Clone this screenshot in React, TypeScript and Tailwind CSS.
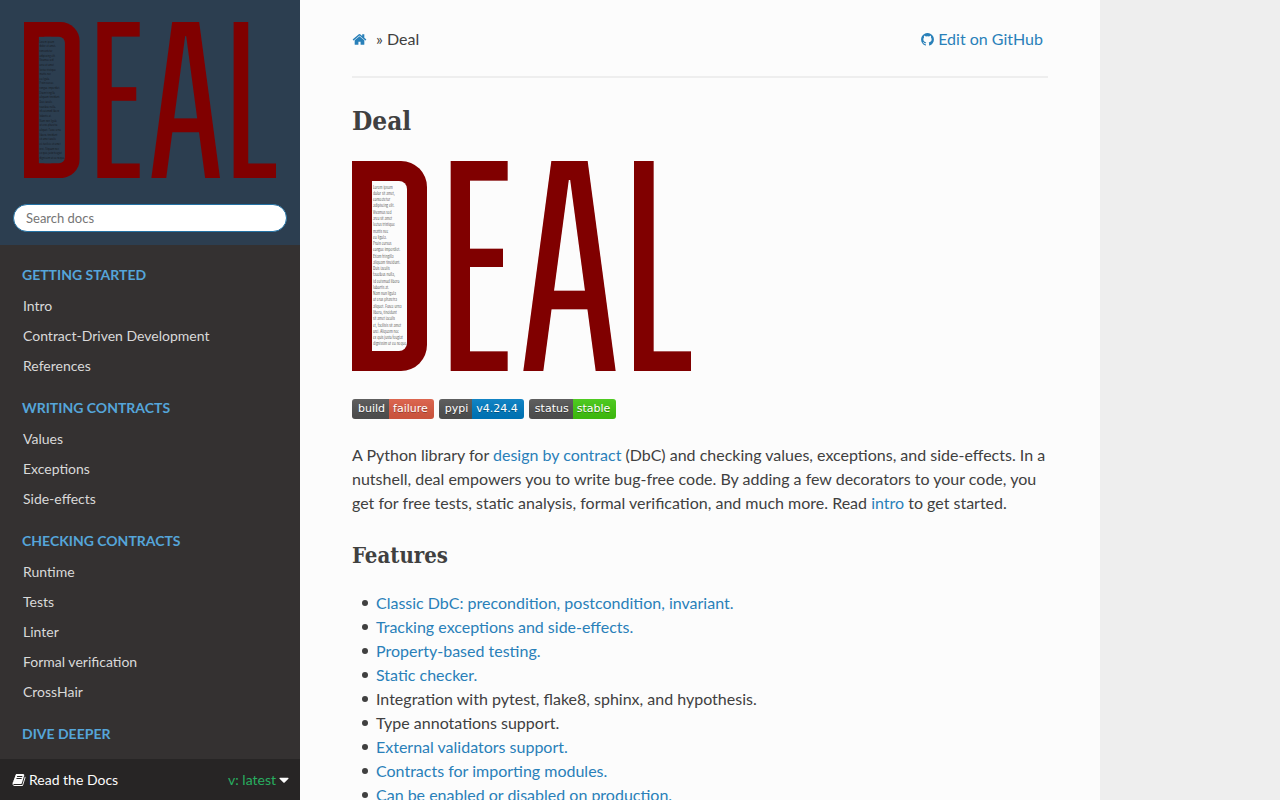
import { useId } from "react";

const loremLines = [
  "Lorem ipsum", "dolor sit amet,", "consectetur", "adipiscing elit.", "Vivamus sed",
  "arcu sit amet", "lectus tristique", "mattis nec", "eu ligula.", "Proin cursus",
  "congue  imperdiet.", "Etiam fringilla", "aliquam tincidunt.", "Duis  iaculis",
  "faucibus nulla,", "id  euismod libero", "lobortis at.", "Nam non ligula",
  "ut eros pharetra", "aliquet. Fusce urna", "libero, tincidunt", "sit amet iaculis",
  "et, facilisis sit amet", "orci. Aliquam nec", "ex quis justo feugiat", "dignissim ut eu neque",
];

function DealLogo({ className }: { className: string }) {
  const maskId = useId();
  return (
    <svg viewBox="0 0 1017 630" className={className} role="img" aria-label="Deal logo">
      <mask id={maskId} maskUnits="userSpaceOnUse" x="0" y="0" width="230" height="630">
        <rect width="225" height="630" rx="78" fill="white" />
        <rect width="110" height="630" fill="white" />
        <rect x="60" y="60" width="105" height="510" rx="24" fill="black" />
        <rect x="60" y="60" width="50" height="510" fill="black" />
      </mask>
      <rect width="225" height="630" fill="#800000" mask={`url(#${maskId})`} />
      <g fill="#111" fontSize="14" fontWeight="300" fontFamily="'Open Sans Condensed Light','Open Sans Condensed','Roboto Condensed',sans-serif">
        {loremLines.map((line, i) => (
          <text key={line} x="63" y={83 + i * 18.8}>{line}</text>
        ))}
      </g>
      <g fill="#800000">
        <rect x="296" width="58" height="630" />
        <rect x="320" width="147" height="59" />
        <rect x="320" y="263" width="133" height="55" />
        <rect x="320" y="571" width="147" height="59" />
        <rect x="630" width="46" height="57" />
        <rect x="590" y="389" width="124" height="56" />
        <rect x="846" width="59" height="630" />
        <rect x="870" y="571" width="147" height="59" />
      </g>
      <g stroke="#800000" strokeWidth="59.5">
        <line x1="536" y1="690" x2="636" y2="-60" />
        <line x1="769" y1="690" x2="669" y2="-60" />
      </g>
    </svg>
  );
}

function Icon({ path, className }: { path: string; className: string }) {
  return (
    <svg viewBox="0 0 1792 1792" fill="currentColor" className={className} aria-hidden="true">
      <path d={path} />
    </svg>
  );
}

const homePath =
  "M1472 992v480q0 26-19 45t-45 19h-384v-384h-256v384h-384q-26 0-45-19t-19-45v-480q0-1 .5-3t.5-3l575-474 575 474q1 2 1 6zm223-69l-62 74q-8 9-21 11h-3q-13 0-21-7l-692-577-692 577q-12 8-24 7-13-2-21-11l-62-74q-8-10-7-23.5t11-21.5l719-599q32-26 76-26t76 26l244 204v-195q0-14 9-23t23-9h192q14 0 23 9t9 23v408l219 182q10 8 11 21.5t-7 23.5z";
const githubPath =
  "M896 128q209 0 385.5 103t279.5 279.5 103 385.5q0 251-146.5 451.5t-378.5 277.5q-27 5-40-7t-13-30q0-3 .5-76.5t.5-134.5q0-97-52-142 57-6 102.5-18t94-39 81-66.5 53-105 20.5-150.5q0-119-79-206 37-91-8-204-28-9-81 11t-92 44l-38 24q-93-26-192-26t-192 26q-16-11-42.5-27t-83.5-38.5-85-13.5q-45 113-8 204-79 87-79 206 0 85 20.5 150t52.5 105 80.5 67 94 39 102.5 18q-39 36-49 103-21 10-45 15t-57 5-65.5-21.5-55.5-62.5q-19-32-48.5-52t-49.5-24l-20-3q-21 0-29 4.5t-5 11.5 9 14 13 12l7 5q22 10 43.5 38t31.5 51l10 23q13 38 44 61.5t67 30 69.5 7 55.5-3.5l23-4q0 38 .5 88.5t.5 54.5q0 18-13 30t-40 7q-232-77-378.5-277.5t-146.5-451.5q0-209 103-385.5t279.5-279.5 385.5-103z";
const bookPath =
  "M1703 478q40 57 18 129l-275 906q-19 64-76.5 107.5t-122.5 43.5h-923q-77 0-148.5-53.5t-99.5-131.5q-24-67-2-127 0-4 3-27t4-37q1-8-3-21.5t-3-19.5q2-11 8-21t16.5-23.5 16.5-23.5q23-38 45-91.5t30-91.5q3-10 .5-30t-.5-28q3-11 17-28t17-23q21-36 42-92t25-90q1-9-2.5-32t.5-28q4-13 22-30.5t22-22.5q19-26 42.5-84.5t27.5-96.5q1-8-3-25.5t-2-26.5q2-8 9-18t18-23 17-21q8-12 16.5-30.5t15-35 16-36 19.5-32 26.5-23.5 36-11.5 47.5 5.5l-1 3q38-9 51-9h761q74 0 114 56t18 130l-274 906q-36 119-71.5 153.5t-128.5 34.5h-869q-27 0-38 15-11 16-1 43 24 70 144 70h923q29 0 56-15.5t35-41.5l300-987q7-22 5-57 38 15 59 43zm-1064 2q-4 13 2 22.5t20 9.5h608q13 0 25.5-9.5t16.5-22.5l21-64q4-13-2-22.5t-20-9.5h-608q-13 0-25.5 9.5t-16.5 22.5zm-83 256q-4 13 2 22.5t20 9.5h608q13 0 25.5-9.5t16.5-22.5l21-64q4-13-2-22.5t-20-9.5h-608q-13 0-25.5 9.5t-16.5 22.5z";
const caretPath = "M1408 704q0 26-19 45l-448 448q-19 19-45 19t-45-19l-448-448q-19-19-19-45t19-45 45-19h896q26 0 45 19t19 45z";

const nav = [
  { title: "Getting started", items: ["Intro", "Contract-Driven Development", "References"] },
  { title: "Writing contracts", items: ["Values", "Exceptions", "Side-effects"] },
  { title: "Checking contracts", items: ["Runtime", "Tests", "Linter", "Formal verification", "CrossHair"] },
  { title: "Dive deeper", items: [] },
];

const features = [
  { text: "Classic DbC: precondition, postcondition, invariant.", link: true },
  { text: "Tracking exceptions and side-effects.", link: true },
  { text: "Property-based testing.", link: true },
  { text: "Static checker.", link: true },
  { text: "Integration with pytest, flake8, sphinx, and hypothesis.", link: false },
  { text: "Type annotations support.", link: false },
  { text: "External validators support.", link: true },
  { text: "Contracts for importing modules.", link: true },
  { text: "Can be enabled or disabled on production.", link: true },
];

const badges = [
  { label: "build", value: "failure", color: "bg-[#e05d44]" },
  { label: "pypi", value: "v4.24.4", color: "bg-[#007ec6]" },
  { label: "status", value: "stable", color: "bg-[#44cc11]" },
];

export default function App() {
  return (
    <div className="flex h-screen overflow-hidden bg-[#eeeeee] font-['Lato',sans-serif] text-base text-[#404040]">
      <aside className="flex w-[300px] shrink-0 flex-col bg-[#343131]">
        <div className="shrink-0 bg-[#2c3e50] px-[13px] pt-[22px] pb-[13px]">
          <a href="#" className="block px-[11px]">
            <DealLogo className="block w-full" />
          </a>
          <input
            type="text"
            aria-label="Search docs"
            placeholder="Search docs"
            className="mt-[26px] block h-7 w-full rounded-full border border-[#2472a4] bg-white px-3 text-[13px] text-[#333] placeholder:text-[#757575] focus:outline-none"
          />
        </div>
        <nav className="min-h-0 flex-1 overflow-y-auto pt-[14px] [scrollbar-width:none]" aria-label="Documentation">
          {nav.map((group) => (
            <section key={group.title} className="mb-[11px] last:mb-0">
              <h2 className="px-[22px] text-[14px] leading-8 font-bold text-[#55a5d9] uppercase">{group.title}</h2>
              <ul>
                {group.items.map((item) => (
                  <li key={item}>
                    <a href="#" className="block px-[23px] text-[14px] leading-[30px] text-[#d9d9d9]">{item}</a>
                  </li>
                ))}
              </ul>
            </section>
          ))}
        </nav>
        <button type="button" className="flex h-[41px] shrink-0 items-center bg-[#272525] px-3 text-[14px] text-[#fcfcfc]">
          <Icon path={bookPath} className="mr-[3px] size-[14px]" />
          Read the Docs
          <span className="ml-auto text-[#27ae60]">v: latest</span>
          <Icon path={caretPath} className="-mr-1 size-4" />
        </button>
      </aside>

      <main className="max-w-[800px] min-w-0 flex-1 overflow-y-auto bg-[#fcfcfc] px-[52px] pt-[27px] [scrollbar-width:none]">
        <nav className="flex items-center leading-6" aria-label="Breadcrumb">
          <a href="#" aria-label="Home" className="text-[#2980b9]">
            <Icon path={homePath} className="size-[15px]" />
          </a>
          <span className="ml-[9px]">» Deal</span>
          <a href="#" className="mr-[5px] ml-auto flex items-center gap-[3px] text-[#2980b9]">
            <Icon path={githubPath} className="size-[15px]" />
            Edit on GitHub
          </a>
        </nav>
        <hr className="mt-[25px] border-t-2 border-[#eeeeee]" />

        <h1 className="mt-6 font-['Roboto_Slab','DejaVu_Serif_Condensed','DejaVu_Serif',serif] text-[26px] leading-[38px] font-bold">Deal</h1>
        <DealLogo className="mt-[21px] block w-[339px]" />

        <div className="mt-7 flex gap-[5px] font-['DejaVu_Sans',sans-serif] text-[11px] leading-5 text-white [text-shadow:0_1px_0_#0000004d]">
          {badges.map((b) => (
            <a key={b.label} href="#" className="flex overflow-hidden rounded-[3px]">
              <span className="bg-[#555555] bg-linear-to-b from-[#bbbbbb1a] to-[#0000001a] pr-1 pl-1.5">{b.label}</span>
              <span className={`bg-linear-to-b from-[#bbbbbb1a] to-[#0000001a] pr-1.5 pl-1 ${b.color}`}>{b.value}</span>
            </a>
          ))}
        </div>

        <p className="mt-6 leading-6">
          A Python library for <a href="#" className="text-[#2980b9]">design by contract</a> (DbC) and checking values,
          exceptions, and side-effects. In a nutshell, deal empowers you to write bug-free code. By adding a few
          decorators to your code, you get for free tests, static analysis, formal verification, and much more. Read{" "}
          <a href="#" className="text-[#2980b9]">intro</a> to get started.
        </p>

        <h2 className="mt-6 font-['Roboto_Slab','DejaVu_Serif_Condensed','DejaVu_Serif',serif] text-[22px] leading-8 font-bold">Features</h2>
        <ul className="mt-5 pl-[10px] leading-6">
          {features.map((f) => (
            <li key={f.text} className="flex items-center gap-2 before:size-1.5 before:rounded-full before:bg-[#404040]">
              {f.link ? <a href="#" className="text-[#2980b9]">{f.text}</a> : f.text}
            </li>
          ))}
        </ul>
      </main>
    </div>
  );
}
